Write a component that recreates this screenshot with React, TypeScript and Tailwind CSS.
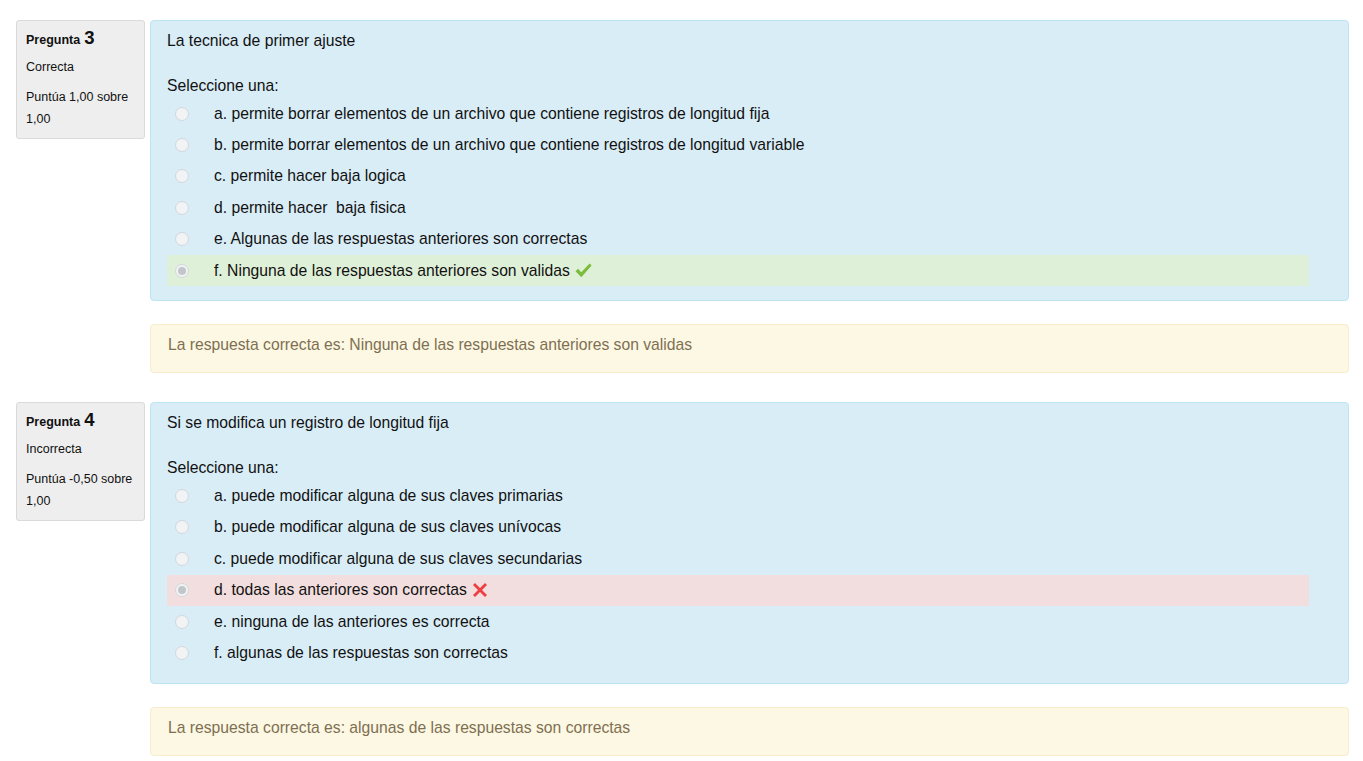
const font = { fontFamily: '"Liberation Sans", Arial, sans-serif' };

type Q = {
  num: number;
  state: string;
  grade: string;
  text: string;
  options: string[];
  chosen: number;
  correct: boolean;
  answer: string;
};

const questions: Q[] = [
  {
    num: 3,
    state: "Correcta",
    grade: "Puntúa 1,00 sobre 1,00",
    text: "La tecnica de primer ajuste",
    options: [
      "a. permite borrar elementos de un archivo que contiene registros de longitud fija",
      "b. permite borrar elementos de un archivo que contiene registros de longitud variable",
      "c. permite hacer baja logica",
      "d. permite hacer\u00a0 baja fisica",
      "e. Algunas de las respuestas anteriores son correctas",
      "f. Ninguna de las respuestas anteriores son validas",
    ],
    chosen: 5,
    correct: true,
    answer: "La respuesta correcta es: Ninguna de las respuestas anteriores son validas",
  },
  {
    num: 4,
    state: "Incorrecta",
    grade: "Puntúa -0,50 sobre 1,00",
    text: "Si se modifica un registro de longitud fija",
    options: [
      "a. puede modificar alguna de sus claves primarias",
      "b. puede modificar alguna de sus claves unívocas",
      "c. puede modificar alguna de sus claves secundarias",
      "d. todas las anteriores son correctas",
      "e. ninguna de las anteriores es correcta",
      "f. algunas de las respuestas son correctas",
    ],
    chosen: 3,
    correct: false,
    answer: "La respuesta correcta es: algunas de las respuestas son correctas",
  },
];

const Check = () => (
  <svg width="17" height="15" viewBox="0 0 17 15" className="ml-[5px] inline-block">
    <path d="M0.5 8.2 L3 5.8 L6.3 9.3 L14.6 0.6 L16.6 2.6 L6.3 14.2 Z" fill="#7cbc3c" strokeLinejoin="round" />
  </svg>
);

const Cross = () => (
  <svg width="16" height="16" viewBox="0 0 16 16" className="ml-[5px] inline-block">
    <path d="M1 3 L3 1 L8 6 L13 1 L15 3 L10 8 L15 13 L13 15 L8 10 L3 15 L1 13 L6 8 Z" fill="#ef3e42" />
  </svg>
);

const Radio = ({ checked }: { checked: boolean }) => (
  <span className="w-[14px] h-[14px] rounded-full border border-[#d3d7da] bg-[#f1f3f4] flex items-center justify-center shrink-0">
    {checked && <span className="w-[8px] h-[8px] rounded-full bg-[#c3c6c9]" />}
  </span>
);

const Question = ({ q }: { q: Q }) => (
  <div className="mb-[29px]">
    <div className="flex items-start gap-[5px]">
      <div className="w-[129px] shrink-0 bg-[#eeeeee] border border-[#dadada] rounded-[3px] pt-[7px] pb-[8px] px-[9px] text-[#111]">
        <div className="h-[20px] flex items-baseline leading-[20px]">
          <span className="text-[12.5px] font-bold">Pregunta</span>
          <span className="text-[18.5px] font-bold ml-[4px]">{q.num}</span>
        </div>
        <div className="text-[12.5px] leading-[20px] mt-[9px]">{q.state}</div>
        <div className="text-[12.5px] leading-[22px] mt-[9px]">{q.grade}</div>
      </div>
      <div className="flex-1">
        <div className="bg-[#d9edf7] border border-[#bde4f2] rounded-[4px] pt-[10px] pb-[14px] pl-[16px] pr-[39px] text-[15.7px] text-[#111]">
          <div className="leading-[20px]">{q.text}</div>
          <div className="leading-[20px] mt-[25px]">Seleccione una:</div>
          <div className="mt-[2px]">
            {q.options.map((o, i) => {
              const sel = i === q.chosen;
              const bg = sel ? (q.correct ? "bg-[#dff0d8]" : "bg-[#f2dede]") : "";
              return (
                <div key={i} className={`flex items-center h-[31.4px] pl-[8px] ${bg}`}>
                  <Radio checked={sel} />
                  <span className="ml-[25px] leading-[20px] flex items-center">
                    {o}
                    {sel && (q.correct ? <Check /> : <Cross />)}
                  </span>
                </div>
              );
            })}
          </div>
        </div>
        <div className="mt-[23px] bg-[#fcf8e3] border border-[#f8eccc] rounded-[4px] pt-[10px] pb-[17px] px-[17px] text-[15.7px] leading-[20px] text-[#7f6f52]">
          {q.answer}
        </div>
      </div>
    </div>
  </div>
);

export default function App() {
  return (
    <div className="min-h-screen bg-white pl-[16px] pr-[14px] pt-[20px]" style={font}>
      {questions.map((q) => (
        <Question key={q.num} q={q} />
      ))}
    </div>
  );
}
